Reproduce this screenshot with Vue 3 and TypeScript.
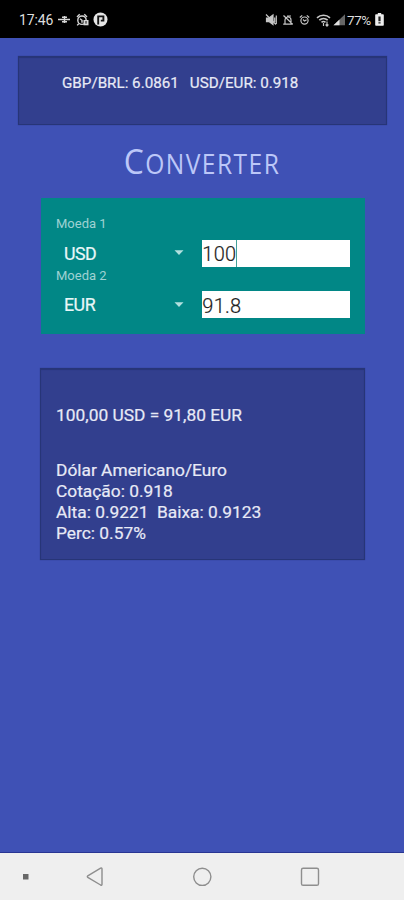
<script setup lang="ts">
import { ref, computed } from 'vue'

interface Row { id: number; label: string; code: string; value: string; focused: boolean }

const ticker = ref(['GBP/BRL: 6.0861', 'USD/EUR: 0.918'])
const rows = ref<Row[]>([
  { id: 1, label: 'Moeda 1', code: 'USD', value: '100', focused: true },
  { id: 2, label: 'Moeda 2', code: 'EUR', value: '91.8', focused: false },
])
const format = (v: string): string => Number(v).toFixed(2).replace('.', ',')
const summary = computed(
  () => `${format(rows.value[0].value)} ${rows.value[0].code} = ${format(rows.value[1].value)} ${rows.value[1].code}`,
)
const details = ['Dólar Americano/Euro', 'Cotação: 0.918', 'Alta: 0.9221\u00a0 Baixa: 0.9123', 'Perc: 0.57%']
</script>

<template>
  <div class="screen">
    <header class="status">
      <span class="clock">17:46</span>
      <svg class="left-icons" width="52" height="16" viewBox="0 0 52 16" fill="none" stroke="#d8d8d8" stroke-width="1.4">
        <path d="M1 7.5h12M5 5.3h5M5 9.7h5M7.5 4v7" />
        <circle cx="25" cy="8.2" r="4.2" />
        <path d="M20 5l2.7-2.7M27.3 2.3L30 5M23 6.7l2 1.6v2.4M21.7 11.7l-1.5 1.7" />
        <path d="M26.5 8h5v5.3h-5z" fill="#d8d8d8" stroke="none" />
        <path d="M29 9v2.7" stroke="#111" stroke-width="1" />
        <circle cx="43.5" cy="7.5" r="7" fill="#e6e6e6" stroke="none" />
        <path d="M41.2 12.5V4.4h5.2v4.2h-2.6" stroke="#151515" stroke-width="1.9" />
      </svg>
      <span class="grow"></span>
      <svg class="right-icons" width="82" height="16" viewBox="0 0 82 16" fill="none" stroke="#c6c6c6" stroke-width="1.2">
        <path d="M1.5 6h2.5l4-3v9.6l-4-3H1.5z" fill="#c6c6c6" />
        <path d="M1 2.5l10 10M9.7 5.5v4.5M11.3 3.5v8.5" />
        <path d="M20 11.8V8a3 3 0 0 1 6 0v3.8M18.2 12.1h9.6M18.5 3.5l9 8.5M22 4h4" />
        <circle cx="39.5" cy="8.6" r="3.6" />
        <path d="M34.8 5.5l2.4-2.1M41.8 3.4l2.4 2.1M38 7.5l1.6 1.6 2-1.3" />
        <path d="M52 5.8a9.5 9.5 0 0 1 13 0M54.3 8.2a6.3 6.3 0 0 1 8.4 0M56.5 10.4a3 3 0 0 1 4 0" stroke-width="1.6" />
        <path d="M58.5 11v3M62 9.5v4.5M60.6 12.5l1.4 1.5 1.4-1.5" />
        <path d="M68.5 13.3L80 2.3v11z" fill="#666" stroke="none" />
        <path d="M68.5 13.3l6-5.8v5.8z" fill="#e0e0e0" stroke="none" />
      </svg>
      <span class="battery-text">77%</span>
      <svg class="battery" width="9" height="13" viewBox="0 0 9 13">
        <path d="M2.8 0h3.4v1.2H8q.8 0 .8.8v10q0 .8-.8.8H1q-.8 0-.8-.8V2q0-.8.8-.8h1.8z" fill="#eee" />
        <path d="M3.4 3.5h2.2v4.7H3.4zM3.4 9.2h2.2v1.3H3.4z" fill="#222" />
      </svg>
    </header>

    <main class="content">
      <section class="panel ticker">
        <span v-for="item in ticker" :key="item">{{ item }}</span>
      </section>

      <h1 class="title">Converter</h1>

      <section class="form">
        <div v-for="row in rows" :key="row.id" class="row">
          <div class="label">{{ row.label }}</div>
          <div class="fields">
            <div class="select">
              <span class="code">{{ row.code }}</span>
              <svg class="arrow" width="10" height="6" viewBox="0 0 10 6"><path d="M.5.3h9L5 5z" fill="#b2e0df" /></svg>
            </div>
            <div class="input"><span class="value">{{ row.value }}</span><i v-if="row.focused" class="caret"></i></div>
          </div>
        </div>
      </section>

      <section class="panel result">
        <p class="summary">{{ summary }}</p>
        <p v-for="line in details" :key="line" class="detail">{{ line }}</p>
      </section>
    </main>

    <nav class="nav">
      <svg width="404" height="47" viewBox="0 0 404 47" fill="none" stroke="#8e8e8e" stroke-width="1.4">
        <path d="M23 21h5.5v5.5H23z" fill="#686868" stroke="none" />
        <path d="M87.8 22.8q-1 .8 0 1.6l12.8 7.6q1.4.7 1.4-.8V16q0-1.5-1.4-.8z" />
        <circle cx="202.3" cy="23.8" r="8.6" />
        <rect x="301.5" y="15.3" width="17" height="17" rx="1.6" />
      </svg>
    </nav>
  </div>
</template>

<style>
body { margin: 0; background: #3f51b5; }
</style>

<style scoped>
.screen {
  width: 404px;
  height: 900px;
  display: flex;
  flex-direction: column;
  background: #3f51b5;
  font-family: Roboto, "Liberation Sans", sans-serif;
  color: #e8eaf6;
  overflow: hidden;
}
.status {
  height: 38px;
  flex: none;
  box-sizing: border-box;
  padding: 1px 20px 0 19px;
  display: flex;
  align-items: center;
  background: #000;
  color: #dedede;
}
.clock { font-size: 14px; width: 36px; letter-spacing: -0.1px; }
.left-icons { margin-left: 2px; }
.grow { flex: 1; }
.battery-text { font-size: 13.5px; width: 26px; margin: 0 2px 0 0; letter-spacing: -0.4px; }
.content { flex: 1; }
.panel {
  box-sizing: border-box;
  background: #323f8e;
  border: 1px solid #273577;
  box-shadow: inset 0 1px 1px #273577, 0 0 1px #2b3a86;
  -webkit-text-stroke: 0.2px #e8eaf6;
}
.ticker {
  margin: 18px 17px 0 18px;
  height: 69px;
  padding: 17px 0 0 43px;
  display: flex;
  gap: 11px;
  font-size: 15.2px;
  line-height: 18px;
  white-space: nowrap;
}
.title {
  margin: 17px 0 0;
  height: 56px;
  line-height: 38px;
  text-align: center;
  text-transform: uppercase;
  font-family: "Open Sans", "Noto Sans", sans-serif;
  font-weight: 400;
  font-size: 27px;
  letter-spacing: 1.6px;
  transform: scaleX(0.91);
  color: #bcc7f8;
}
.title::first-letter { font-size: 35px; }
.form {
  box-sizing: border-box;
  margin: 0 39px 0 41px;
  width: 324px;
  height: 136px;
  padding: 18px 15px 0;
  background: #018786;
}
.row { height: 52px; }
.label { height: 16px; line-height: 16px; font-size: 13px; color: #9fd2d3; }
.fields { display: flex; align-items: center; height: 46px; margin-top: -2px; }
.row + .row .fields { height: 45.5px; }
.select { width: 146.5px; display: flex; align-items: center; }
.code {
  width: 118px;
  box-sizing: border-box;
  padding: 1px 0 0 8px;
  font-size: 17.8px;
  letter-spacing: -0.5px;
  line-height: 20px;
  color: #e8f7f8;
  -webkit-text-stroke: 0.2px #e8f7f8;
}
.input {
  width: 148px;
  height: 27px;
  display: flex;
  align-items: center;
  background: #fff;
  color: #222;
  font-size: 20px;
  font-weight: 300;
  letter-spacing: 0.3px;
}
.value { padding-top: 2px; -webkit-text-stroke: 0.2px #222; }
.caret { width: 1px; height: 27px; background: #44a29a; }
.result {
  margin: 34px 39px 0 40px;
  height: 192px;
  padding: 36px 0 0 15px;
  font-size: 17.35px;
}
p { margin: 0; white-space: nowrap; line-height: 20.9px; }
.summary { margin-bottom: 34px; }
.nav { height: 47px; flex: none; background: #efefef; box-shadow: 0 -1px 0 #283593; }
.nav svg { display: block; }
</style>
